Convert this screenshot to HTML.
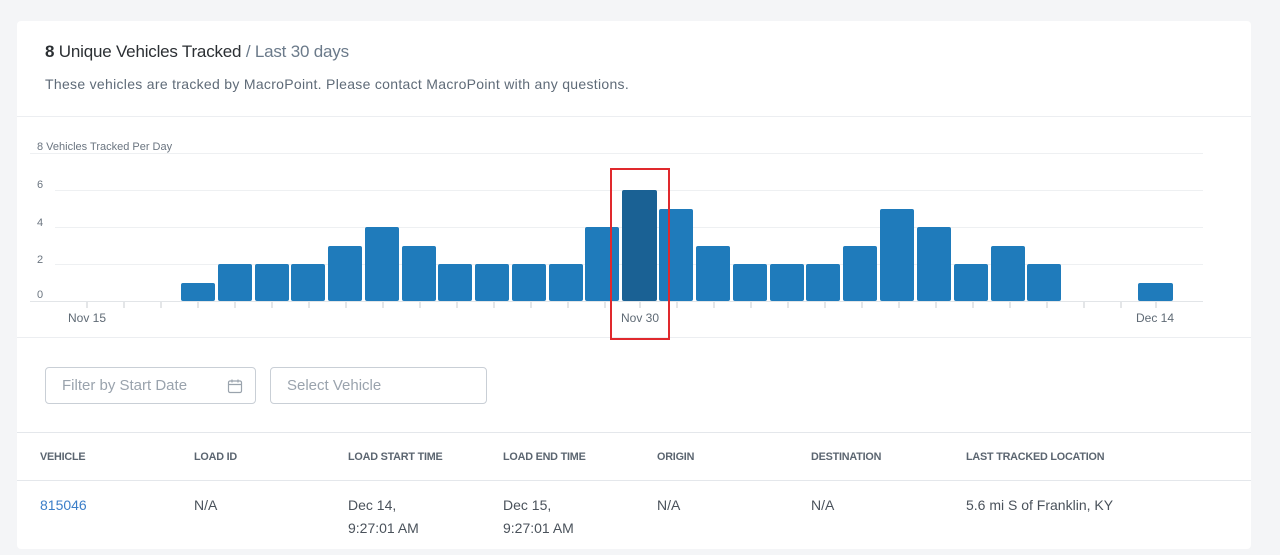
<!DOCTYPE html>
<html><head><style>
body{margin:0;width:1280px;height:555px;background:#f4f5f7;font-family:"Liberation Sans",sans-serif;position:relative;overflow:hidden}
.card{position:absolute;left:17px;top:21px;width:1234px;height:528px;background:#fff;border-radius:4px}
.a{position:absolute;white-space:nowrap}
.hr{position:absolute;left:0;width:1234px;height:1px;background:#eceef1}
.inp{position:absolute;top:346px;border:1px solid #c9cfd6;border-radius:4px;color:#9aa3ad;font-size:15px;line-height:35px;padding-left:16px;box-sizing:border-box;height:37px}
.th{position:absolute;top:430px;font-size:10.8px;font-weight:bold;color:#5b6570;letter-spacing:-0.2px}
.td{position:absolute;top:473px;font-size:14px;color:#4a525b;line-height:23px}
</style></head><body>
<div class="card">
<div class="a" style="left:28px;top:21px;font-size:17px;color:#2b2f33;letter-spacing:-0.2px"><b style="font-weight:bold">8</b> Unique Vehicles Tracked <span style="color:#6b7a8a">/ Last 30 days</span></div>
<div class="a" style="left:28px;top:55px;font-size:14px;color:#5f6b78;letter-spacing:0.3px">These vehicles are tracked by MacroPoint. Please contact MacroPoint with any questions.</div>
<div class="hr" style="top:95px"></div>
<div class="hr" style="top:316px"></div>
<div class="inp" style="left:28px;width:211px">Filter by Start Date
<svg style="position:absolute;right:12px;top:10px" width="16" height="16" viewBox="0 0 16 16" fill="none" stroke="#9aa3ad" stroke-width="1.2"><rect x="1.5" y="3" width="13" height="11.5" rx="1.5"/><path d="M1.5 6.5h13M5 1.5v3M11 1.5v3"/></svg></div>
<div class="inp" style="left:253px;width:217px">Select Vehicle</div>
<div class="hr" style="top:411px;background:#e4e7eb"></div>
<div class="hr" style="top:459px;background:#e4e7eb"></div>
<div class="th" style="left:23px">VEHICLE</div>
<div class="th" style="left:177px">LOAD ID</div>
<div class="th" style="left:331px">LOAD START TIME</div>
<div class="th" style="left:486px">LOAD END TIME</div>
<div class="th" style="left:640px">ORIGIN</div>
<div class="th" style="left:794px">DESTINATION</div>
<div class="th" style="left:949px">LAST TRACKED LOCATION</div>
<div class="td" style="left:23px;color:#3b7ec8">815046</div>
<div class="td" style="left:177px">N/A</div>
<div class="td" style="left:331px">Dec 14,<br>9:27:01 AM</div>
<div class="td" style="left:486px">Dec 15,<br>9:27:01 AM</div>
<div class="td" style="left:640px">N/A</div>
<div class="td" style="left:794px">N/A</div>
<div class="td" style="left:949px">5.6 mi S of Franklin, KY</div>
</div>
<svg style="position:absolute;left:0;top:0" width="1280" height="555" font-family="Liberation Sans" font-size="11" fill="#6b7580">
<text x="37" y="150">8 Vehicles Tracked Per Day</text>
<g stroke="#eef0f2" stroke-width="1">
<line x1="30" y1="153.5" x2="1203" y2="153.5"/><line x1="55" y1="190.5" x2="1203" y2="190.5"/><line x1="55" y1="227.5" x2="1203" y2="227.5"/><line x1="55" y1="264.5" x2="1203" y2="264.5"/></g>
<line x1="30" y1="301.5" x2="1203" y2="301.5" stroke="#e2e5e8"/>
<text x="37" y="188">6</text><text x="37" y="226">4</text><text x="37" y="263">2</text><text x="37" y="298">0</text>
<g stroke="#c8cdd2">
<path d="M87 302v6M124 302v6M161 302v6M198 302v6M235 302v6M272 302v6M309 302v6M346 302v6M383 302v6M420 302v6M457 302v6M494 302v6M531 302v6M568 302v6M605 302v6M640 302v6M677 302v6M714 302v6M751 302v6M788 302v6M825 302v6M862 302v6M899 302v6M936 302v6M973 302v6M1010 302v6M1047 302v6M1084 302v6M1121 302v6M1156 302v6"/></g>
<g fill="#1f7bbb">
<rect x="181" y="283" width="34" height="18" rx="2"/>
<rect x="218" y="264" width="34" height="37" rx="2"/>
<rect x="255" y="264" width="34" height="37" rx="2"/>
<rect x="291" y="264" width="34" height="37" rx="2"/>
<rect x="328" y="246" width="34" height="55" rx="2"/>
<rect x="365" y="227" width="34" height="74" rx="2"/>
<rect x="402" y="246" width="34" height="55" rx="2"/>
<rect x="438" y="264" width="34" height="37" rx="2"/>
<rect x="475" y="264" width="34" height="37" rx="2"/>
<rect x="512" y="264" width="34" height="37" rx="2"/>
<rect x="549" y="264" width="34" height="37" rx="2"/>
<rect x="585" y="227" width="34" height="74" rx="2"/>
<rect x="622" y="190" width="35" height="111" rx="2" fill="#1a6194"/>
<rect x="659" y="209" width="34" height="92" rx="2"/>
<rect x="696" y="246" width="34" height="55" rx="2"/>
<rect x="733" y="264" width="34" height="37" rx="2"/>
<rect x="770" y="264" width="34" height="37" rx="2"/>
<rect x="806" y="264" width="34" height="37" rx="2"/>
<rect x="843" y="246" width="34" height="55" rx="2"/>
<rect x="880" y="209" width="34" height="92" rx="2"/>
<rect x="917" y="227" width="34" height="74" rx="2"/>
<rect x="954" y="264" width="34" height="37" rx="2"/>
<rect x="991" y="246" width="34" height="55" rx="2"/>
<rect x="1027" y="264" width="34" height="37" rx="2"/>
<rect x="1138" y="283" width="35" height="18" rx="2"/>
</g>
<g font-size="12" text-anchor="middle" fill="#5f6a75"><text x="87" y="322">Nov 15</text><text x="640" y="322">Nov 30</text><text x="1155" y="322">Dec 14</text></g>
<rect x="611" y="169" width="58" height="170" fill="none" stroke="#e0292d" stroke-width="2"/>
</svg>
</body></html>
